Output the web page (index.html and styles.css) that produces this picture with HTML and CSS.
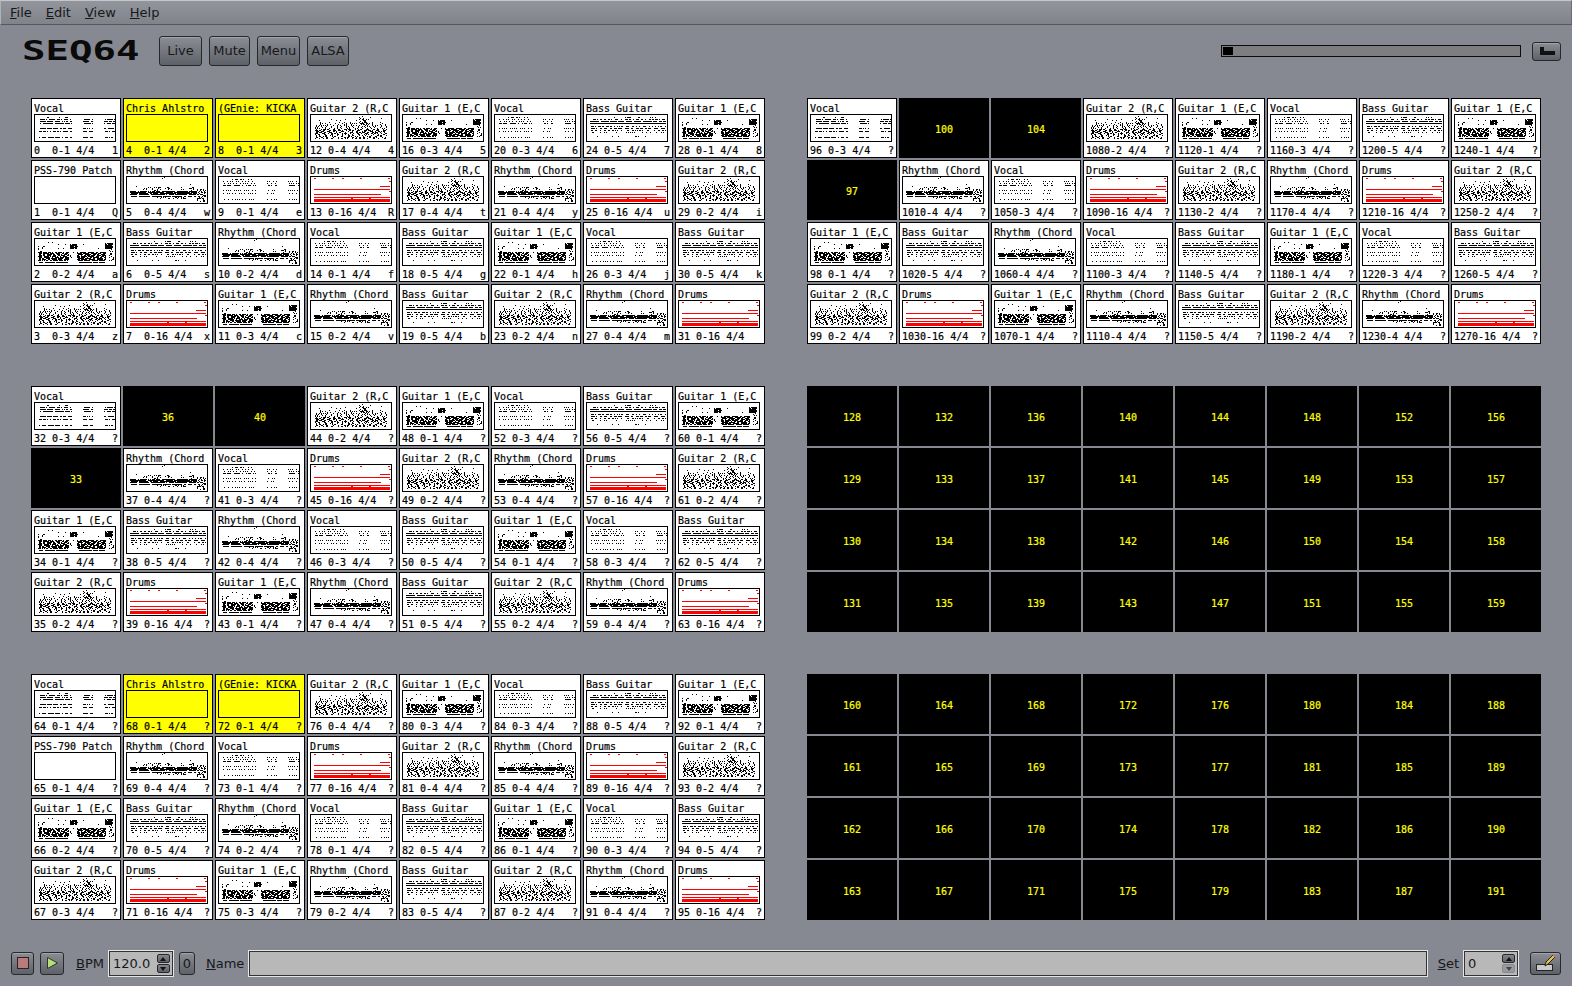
FILE: index.html
```html
<!DOCTYPE html>
<html lang="en">
<head>
    <meta charset="UTF-8">
    <title>seq64</title>
    <link rel="stylesheet" href="styles.css">
</head>
<body>
    <div class="menubar">
        <span class="menu-item"><u>F</u>ile</span>
        <span class="menu-item"><u>E</u>dit</span>
        <span class="menu-item"><u>V</u>iew</span>
        <span class="menu-item"><u>H</u>elp</span>
    </div>

    <div class="topbar">
        <div class="logo"><span class="logo-text">SEQ64</span></div>
        <button class="btn btn-live">Live</button>
        <button class="btn btn-mute">Mute</button>
        <button class="btn btn-menu">Menu</button>
        <button class="btn btn-alsa">ALSA</button>
        <div class="progress"><div class="progress-pos"></div></div>
        <button class="btn btn-panic">
            <svg width="16" height="8" viewBox="0 0 16 8"><path d="M1 0h4v4h11v4H1z" fill="#111"/></svg>
        </button>
    </div>

    <!-- the six screen sets get filled in by app.js -->
    <div class="sets" id="sets"></div>

    <div class="bottombar">
        <button class="btn btn-stop">
            <svg width="12" height="12" viewBox="0 0 12 12"><rect x="0.5" y="0.5" width="11" height="11" fill="#b97c7c" stroke="#2a2222"/></svg>
        </button>
        <button class="btn btn-play">
            <svg width="14" height="14" viewBox="0 0 14 14"><path d="M2.5 1.5L12.5 7L2.5 12.5z" fill="#b6df7c" stroke="#2c3a20"/></svg>
        </button>
        <span class="label label-bpm"><u>B</u>PM</span>
        <div class="field spin spin-bpm">
            <span class="field-value">120.0</span>
            <div class="spin-btns">
                <span class="spin-btn"><i class="arrow-up"></i></span>
                <span class="spin-btn"><i class="arrow-down"></i></span>
            </div>
        </div>
        <button class="btn btn-zero">0</button>
        <span class="label label-name"><u>N</u>ame</span>
        <div class="field field-name"></div>
        <span class="label label-set"><u>S</u>et</span>
        <div class="field spin spin-set">
            <span class="field-value">0</span>
            <div class="spin-btns">
                <span class="spin-btn"><i class="arrow-up"></i></span>
                <span class="spin-btn off"><i class="arrow-down"></i></span>
            </div>
        </div>
        <button class="btn btn-edit">
            <svg width="22" height="20" viewBox="0 0 22 20">
                <rect x="1.5" y="11.5" width="16" height="6" fill="#c9c9c9" stroke="#222"/>
                <path d="M10 13L11 9L18 2L20 4L13 11z" fill="#e8c04a" stroke="#222"/>
                <path d="M17.5 2.5L19.5 4.5L20.5 3.5L18.5 1.5z" fill="#d9708a"/>
            </svg>
        </button>
    </div>

    <script src="app.js"></script>
</body>
</html>
```

FILE: styles.css
```css
* {
    box-sizing: border-box;
}
html, body {
    height: 100%;
}
body {
    margin: 0;
    display: flex;
    flex-direction: column;
    overflow: hidden;
    background-color: #868991;
    color: #17181a;
    font-family: "DejaVu Sans", sans-serif;
    font-size: 13px;
}
button {
    font-family: inherit;
    font-size: 13px;
    color: inherit;
    padding: 0;
}

/* menu */
.menubar {
    height: 25px;
    flex: none;
    display: flex;
    align-items: center;
    padding: 0 0 0 9px;
    background: linear-gradient(#92959c, #80838a);
    border: 1px solid #6a6c72;
    border-top-color: #c4c6ca;
    border-left-color: #b0b2b7;
    border-bottom: 1px solid #55575c;
}
.menu-item {
    margin-right: 14px;
}

/* top row */
.topbar {
    height: 73px;
    flex: none;
    display: flex;
    align-items: flex-start;
    padding: 11px 11px 0 22px;
}
.logo {
    width: 137px;
    height: 30px;
    flex: none;
}
.logo-text {
    display: inline-block;
    font-family: "DejaVu Sans Mono", monospace;
    font-weight: bold;
    font-size: 26px;
    line-height: 30px;
    color: #0a0a0a;
    transform: scaleX(1.5);
    transform-origin: left center;
}
.btn {
    height: 30px;
    display: flex;
    align-items: center;
    justify-content: center;
    flex: none;
    background: linear-gradient(#8a8d94, #5f6169);
    border: 1px solid #27282c;
    border-radius: 3px;
    box-shadow: inset 0 1px 0 #a2a4aa;
    padding-bottom: 1px;
}
.btn-live { width: 43px; }
.btn-mute { width: 41px; margin-left: 7px; }
.btn-menu { width: 43px; margin-left: 7px; }
.btn-alsa { width: 42px; margin-left: 7px; }
.progress {
    width: 300px;
    height: 12px;
    margin: 9px 0 0 auto;
    padding: 1px;
    background: #7e7e7e;
    border: 1px solid #0c0c0c;
}
.progress-pos {
    width: 10px;
    height: 8px;
    background: #000;
}
.btn-panic {
    width: 29px;
    height: 19px;
    margin: 6px 0 0 11px;
}

/* pattern grid */
.sets {
    flex: none;
    display: grid;
    grid-template-columns: repeat(2, 734px);
    gap: 42px;
    padding-left: 31px;
}
.set {
    display: grid;
    grid-auto-flow: column;
    grid-template-columns: repeat(8, 90px);
    grid-template-rows: repeat(4, 60px);
    gap: 2px;
}
.cell {
    border: 1px solid #000;
    padding: 2px;
    background: #fff;
    color: #000;
    font-family: "DejaVu Sans Mono", monospace;
    font-size: 10px;
    -webkit-text-stroke: 0.2px currentColor;
    overflow: hidden;
}
.cell.on {
    background: #ff0;
}
.cell.empty {
    display: flex;
    align-items: center;
    justify-content: center;
    padding: 3px 2px 1px;
    background: #000;
    color: #ff0;
}
.cell-name {
    height: 13px;
    line-height: 16px;
    white-space: pre;
    overflow: hidden;
}
.cell-box {
    display: block;
    width: 82px;
    height: 28px;
    border: 1px solid #000;
}
.cell-foot {
    display: flex;
    justify-content: space-between;
    height: 13px;
    line-height: 18px;
    white-space: pre;
}

/* bottom row */
.bottombar {
    height: 25px;
    flex: none;
    display: flex;
    align-items: center;
    margin-top: 31px;
    padding: 0 11px;
}
.bottombar .btn {
    height: 23px;
}
.btn-stop { width: 23px; }
.btn-play { width: 24px; margin-left: 6px; }
.label {
    flex: none;
    white-space: pre;
}
.label-bpm { margin-left: 12px; }
.field {
    height: 25px;
    flex: none;
    background: #b8b8b8;
    border: 1px solid #333;
    outline: 1px solid #e6e6e6;
}
.spin {
    display: flex;
    align-items: center;
    justify-content: space-between;
    padding: 0 2px 0 3px;
}
.spin-bpm {
    width: 64px;
    margin-left: 5px;
}
.spin-set {
    width: 54px;
    margin-left: 5px;
}
.spin-btns {
    display: flex;
    flex-direction: column;
    gap: 1px;
}
.spin-btn {
    width: 13px;
    height: 9px;
    display: flex;
    align-items: center;
    justify-content: center;
    background: linear-gradient(#85878e, #5f6169);
    border: 1px solid #27282c;
    border-radius: 2px;
}
.spin-btn.off {
    background: #8c8e94;
    border-color: #74767c;
    opacity: 0.7;
}
.arrow-up {
    border: 3px solid transparent;
    border-top: 0;
    border-bottom: 4px solid #111;
}
.arrow-down {
    border: 3px solid transparent;
    border-bottom: 0;
    border-top: 4px solid #111;
}
.btn-zero {
    width: 16px;
    margin-left: 6px;
}
.label-name { margin-left: 11px; }
.field-name {
    flex: 1;
    margin-left: 5px;
}
.label-set { margin-left: 11px; }
.btn-edit {
    width: 31px;
    margin-left: 12px;
}
```

FILE: app.js
```js
// seeded so the little piano rolls stay the same from run to run
let seed = 20;
function rnd() {
    seed = (seed * 1664525 + 1013904223) % 4294967296;
    return seed / 4294967296;
}

function px(x, y, w, h) {
    return 'M' + x + ' ' + y + 'h' + w + 'v' + h + 'h-' + w + 'z';
}

// horizontal row of dashes
function dashes(x0, x1, y, on, off) {
    let d = '';
    let x = x0 + Math.floor(rnd() * 2);
    while (x < x1) {
        const w = Math.min(1 + Math.floor(rnd() * on), x1 - x);
        d += px(x, y, w, 1);
        x += w + 1 + Math.floor(rnd() * off);
    }
    return d;
}

// same thing stacked over several rows
function band(x0, x1, y0, y1, on, off) {
    let d = '';
    for (let y = y0; y < y1; y++) d += dashes(x0, x1, y, on, off);
    return d;
}

// random dots in a rectangle
function noise(x0, x1, y0, y1, p) {
    let d = '';
    for (let y = y0; y < y1; y++) {
        for (let x = x0; x < x1; x++) {
            if (rnd() < p) d += px(x, y, 1, 1);
        }
    }
    return d;
}

function vocal(on, off) {
    let d = '';
    [[4, 37], [48, 58], [69, 80]].forEach(([a, b]) => {
        d += noise(a + 8, b - 3, 2, 3, 0.4);
        [4, 6, 8, 13, 16, 22].forEach(y => {
            d += dashes(a, b, y, y === 8 ? on + 5 : on, off);
        });
    });
    return d;
}

function guitar1() {
    return noise(3, 78, 2, 10, 0.025) +
        noise(35, 42, 5, 10, 0.9) + noise(70, 78, 4, 10, 0.9) +
        noise(3, 8, 9, 14, 0.3) + noise(74, 79, 10, 22, 0.2) +
        band(3, 34, 13, 22, 6, 2) + band(42, 71, 13, 22, 6, 2) +
        noise(34, 42, 11, 20, 0.1) +
        dashes(4, 34, 23, 14, 2) + dashes(44, 70, 23, 14, 2);
}

function guitar2() {
    return noise(4, 78, 1, 6, 0.02) + band(8, 76, 7, 10, 1, 10) +
        noise(48, 56, 3, 10, 0.45) + band(4, 76, 10, 14, 1, 5) +
        band(4, 76, 14, 19, 3, 4) + band(4, 76, 19, 24, 2, 5);
}

function rhythm() {
    return noise(8, 70, 0, 11, 0.018) + noise(10, 70, 10, 13, 0.14) +
        noise(25, 33, 10, 14, 0.4) + noise(62, 68, 10, 14, 0.4) +
        band(3, 70, 14, 18, 16, 2) + dashes(3, 70, 19, 12, 2) +
        noise(30, 60, 20, 22, 0.3) + noise(70, 79, 12, 25, 0.35);
}

function bass() {
    return noise(20, 70, 2, 3, 0.15) + dashes(5, 79, 4, 3, 3) +
        dashes(3, 79, 6, 9, 2) + px(3, 8, 76, 1) + dashes(3, 79, 11, 3, 3) +
        dashes(3, 79, 13, 4, 3) + dashes(3, 79, 15, 2, 5) +
        noise(3, 79, 17, 18, 0.2) + noise(3, 79, 21, 22, 0.08);
}

function drums() {
    return [[3, 1], [21, 1], [31, 1], [49, 1], [77, 1], [78, 4], [78, 14], [40, 21], [58, 21]]
            .map(p => px(p[0], p[1], 2, 1)).join('') +
        px(69, 9, 10, 1) + px(3, 12, 76, 1) + px(3, 17, 67, 1) +
        px(3, 20, 76, 1) + px(3, 22, 76, 3);
}

const art = {
    V: vocal(6, 2),
    v: vocal(1, 3),
    G: guitar1(),
    H: guitar2(),
    R: rhythm(),
    B: bass(),
    D: drums()
};
const names = {
    V: 'Vocal', v: 'Vocal', G: 'Guitar 1 (E,C', H: 'Guitar 2 (R,C', R: 'Rhythm (Chord',
    B: 'Bass Guitar', D: 'Drums', P: 'PSS-790 Patch', C: 'Chris Ahlstro', K: '(GEnie: KICKA'
};

// one entry per pattern, type then channel, "-" for an empty slot
const layoutA = 'V1 P1 G2 H3 C1 R4 B5 D16 K1 v1 R2 G3 H4 D16 v1 R2 G3 H4 B5 B5 v3 R4 G1 H2 B5 D16 v3 R4 G1 H2 B5 D16'.split(' ');
const layoutB = 'V3 - G1 H2 - R4 B5 D16 - v3 R4 G1 H2 D16 v3 R4 G1 H2 B5 B5 v3 R4 G1 H2 B5 D16 v3 R4 G1 H2 B5 D16'.split(' ');
const keys = ['1Qaz', '2wsx', '3edc', '4Rfv', '5tgb', '6yhn', '7ujm', '8ik '];

function makeCell(seq, entry, withKeys) {
    const cell = document.createElement('div');
    if (!entry || entry === '-') {
        cell.className = 'cell empty';
        cell.textContent = seq;
        return cell;
    }
    const type = entry[0];
    const chan = entry.slice(1);
    const yellow = type === 'C' || type === 'K';
    const path = art[type] || '';
    const colour = type === 'D' ? '#f00' : '#000';
    const col = Math.floor((seq % 32) / 4);
    const key = withKeys ? keys[col][seq % 4] : '?';

    cell.className = yellow ? 'cell on' : 'cell';
    cell.innerHTML =
        '<div class="cell-name">' + names[type] + '</div>' +
        '<svg class="cell-box" viewBox="0 0 80 26" shape-rendering="crispEdges"><path fill="' + colour + '" d="' + path + '"/></svg>' +
        '<div class="cell-foot"><span>' + String(seq).padEnd(3) + '0-' + chan + ' 4/4</span><span>' + key + '</span></div>';
    return cell;
}

const sets = document.getElementById('sets');
[[0, layoutA], [96, layoutB], [32, layoutB], [128, null], [64, layoutA], [160, null]].forEach(([start, layout]) => {
    const set = document.createElement('div');
    set.className = 'set';
    for (let i = 0; i < 32; i++) {
        set.appendChild(makeCell(start + i, layout && layout[i], start === 0));
    }
    sets.appendChild(set);
});
```
